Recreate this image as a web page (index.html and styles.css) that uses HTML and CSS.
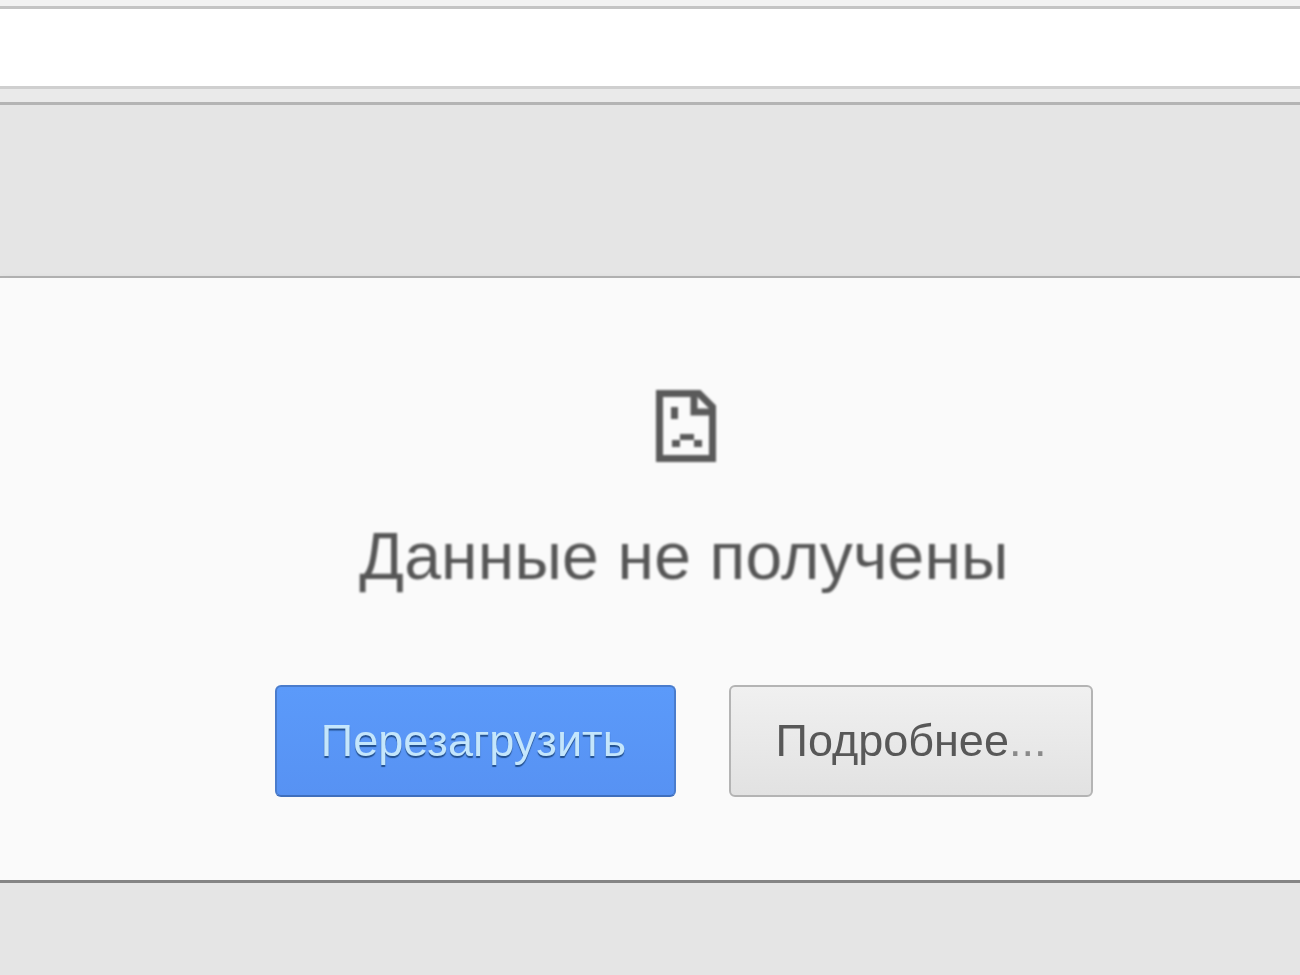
FILE: index.html

```html
<!DOCTYPE html>
<html lang="ru">
<head>
  <meta charset="UTF-8">
  <title>Данные не получены</title>
  <link rel="stylesheet" href="styles.css">
</head>
<body>

<div class="top-strip"></div>
<div class="address-bar"></div>
<div class="bookmarks"></div>
<div class="page-header"></div>

<main class="card">
  <svg class="sad-icon" width="60" height="74" viewBox="0 0 60 74">
    <path class="sad-line" d="M3.5 3.5H43L56.5 17V68.5H3.5Z"></path>
    <path class="sad-line" d="M38 3.5V22H56.5"></path>
    <rect class="sad-dot" x="15" y="17" width="7" height="12"></rect>
    <rect class="sad-dot" x="24" y="44" width="14" height="6"></rect>
    <rect class="sad-dot" x="16" y="50" width="8" height="7"></rect>
    <rect class="sad-dot" x="38" y="50" width="8" height="7"></rect>
  </svg>
  <h1 class="title">Данные не получены</h1>
  <div class="buttons">
    <button class="btn btn-blue">Перезагрузить</button>
    <button class="btn btn-grey">Подробнее<span class="dots">...</span></button>
  </div>
</main>

<div class="page-footer"></div>

</body>
</html>
```

FILE: styles.css

```css
html, body { margin: 0; padding: 0; height: 975px; overflow: hidden; }
body { background: #e5e5e5; font-family: "Liberation Sans", Arial, sans-serif; display: flex; flex-direction: column; }

.top-strip { height: 6px; background: #f2f2f2; border-bottom: 3px solid #c4c4c4; }
.address-bar { height: 77px; background: #fff; border-bottom: 3px solid #cfcfcf; }
.bookmarks { height: 13px; background: #eaeaea; border-bottom: 3px solid #b4b4b4; }
.page-header { height: 171px; background: #e5e5e5; border-bottom: 2px solid #b0b0b0; }

.card {
  height: 605px;
  box-sizing: border-box;
  background: #fafafa;
  border-bottom: 3px solid #858585;
  box-shadow: 0 3px 7px #b4b4b4;
  padding: 112px 0 0 68px;
  display: flex;
  flex-direction: column;
  align-items: center;
}

.sad-icon { display: block; margin-left: 4px; filter: blur(1px); }
.sad-line { fill: none; stroke: #5a5a5a; stroke-width: 7; }
.sad-dot { fill: #5a5a5a; }

.title {
  margin: 55px 0 0;
  font-size: 66px;
  line-height: 74px;
  font-weight: normal;
  letter-spacing: 0.2px;
  color: #565656;
  filter: blur(0.8px);
}

.buttons { display: flex; gap: 53px; margin-top: 92px; }

.btn {
  height: 112px;
  box-sizing: border-box;
  padding: 0;
  border-radius: 6px;
  font-family: "Liberation Sans", Arial, sans-serif;
  font-size: 45px;
  filter: blur(0.7px);
}
.btn-blue {
  width: 401px;
  padding-right: 4px;
  background: linear-gradient(#5b9afa, #5792f3);
  border: 2px solid #4a7ccc;
  border-bottom-color: #3f6fbd;
  color: #c4e6fc;
  text-shadow: 0 2px 1px #23508f;
}
.btn-grey {
  width: 364px;
  background: linear-gradient(#f0f0f0, #e2e2e2);
  border: 2px solid #b4b4b4;
  color: #585858;
}
.dots { color: #8a8a8a; }

.page-footer { flex: 1; background: #e5e5e5; }
```
